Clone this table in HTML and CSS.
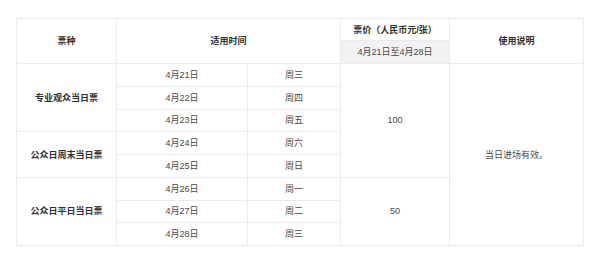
FILE: index.html
```html
<!DOCTYPE html>
<html lang="zh-CN">
<head>
<meta charset="utf-8">
<title>票价</title>
<link rel="stylesheet" href="styles.css">
</head>
<body>
<div class="wrap">
<table class="tickets">
  <colgroup>
    <col class="c1"><col class="c2"><col class="c3"><col class="c4"><col class="c5">
  </colgroup>
  <thead>
    <tr class="h1">
      <th rowspan="2">票种</th>
      <th rowspan="2" colspan="2">适用时间</th>
      <th>票价（人民币元/张）</th>
      <th rowspan="2">使用说明</th>
    </tr>
    <tr class="h2">
      <td class="grey">4月21日至4月28日</td>
    </tr>
  </thead>
  <tbody>
    <tr><th rowspan="3">专业观众当日票</th><td>4月21日</td><td>周三</td><td rowspan="5">100</td><td rowspan="8">当日进场有效。</td></tr>
    <tr><td>4月22日</td><td>周四</td></tr>
    <tr><td>4月23日</td><td>周五</td></tr>
    <tr><th rowspan="2">公众日周末当日票</th><td>4月24日</td><td>周六</td></tr>
    <tr><td>4月25日</td><td>周日</td></tr>
    <tr><th rowspan="3">公众日平日当日票</th><td>4月26日</td><td>周一</td><td rowspan="3">50</td></tr>
    <tr><td>4月27日</td><td>周二</td></tr>
    <tr><td>4月28日</td><td>周三</td></tr>
  </tbody>
</table>
</div>
</body>
</html>
```

FILE: styles.css
```css
html, body {
  margin: 0;
  padding: 0;
  background: #fff;
}
.wrap {
  padding: 18px 0 0 16px;
}
.tickets {
  border-collapse: collapse;
  table-layout: fixed;
  width: 568px;
  font-family: "Liberation Sans", "Noto Sans CJK SC", sans-serif;
  font-size: 9px;
  color: #484848;
}
.c1 { width: 100px; }
.c2 { width: 131px; }
.c3 { width: 93px; }
.c4 { width: 109px; }
.c5 { width: 134px; }
.tickets th,
.tickets td {
  border: 1px solid #ebebeb;
  text-align: center;
  vertical-align: middle;
  padding: 0;
  line-height: 12px;
}
.tickets th {
  font-weight: bold;
  color: #2f2f2f;
}
.tickets .h1 th,
.tickets .h1 td { height: 21px; }
.tickets .h2 td { height: 22px; }
.tickets .grey {
  background: #f2f2f2;
}
.tickets tbody tr { height: 22.75px; }
```
